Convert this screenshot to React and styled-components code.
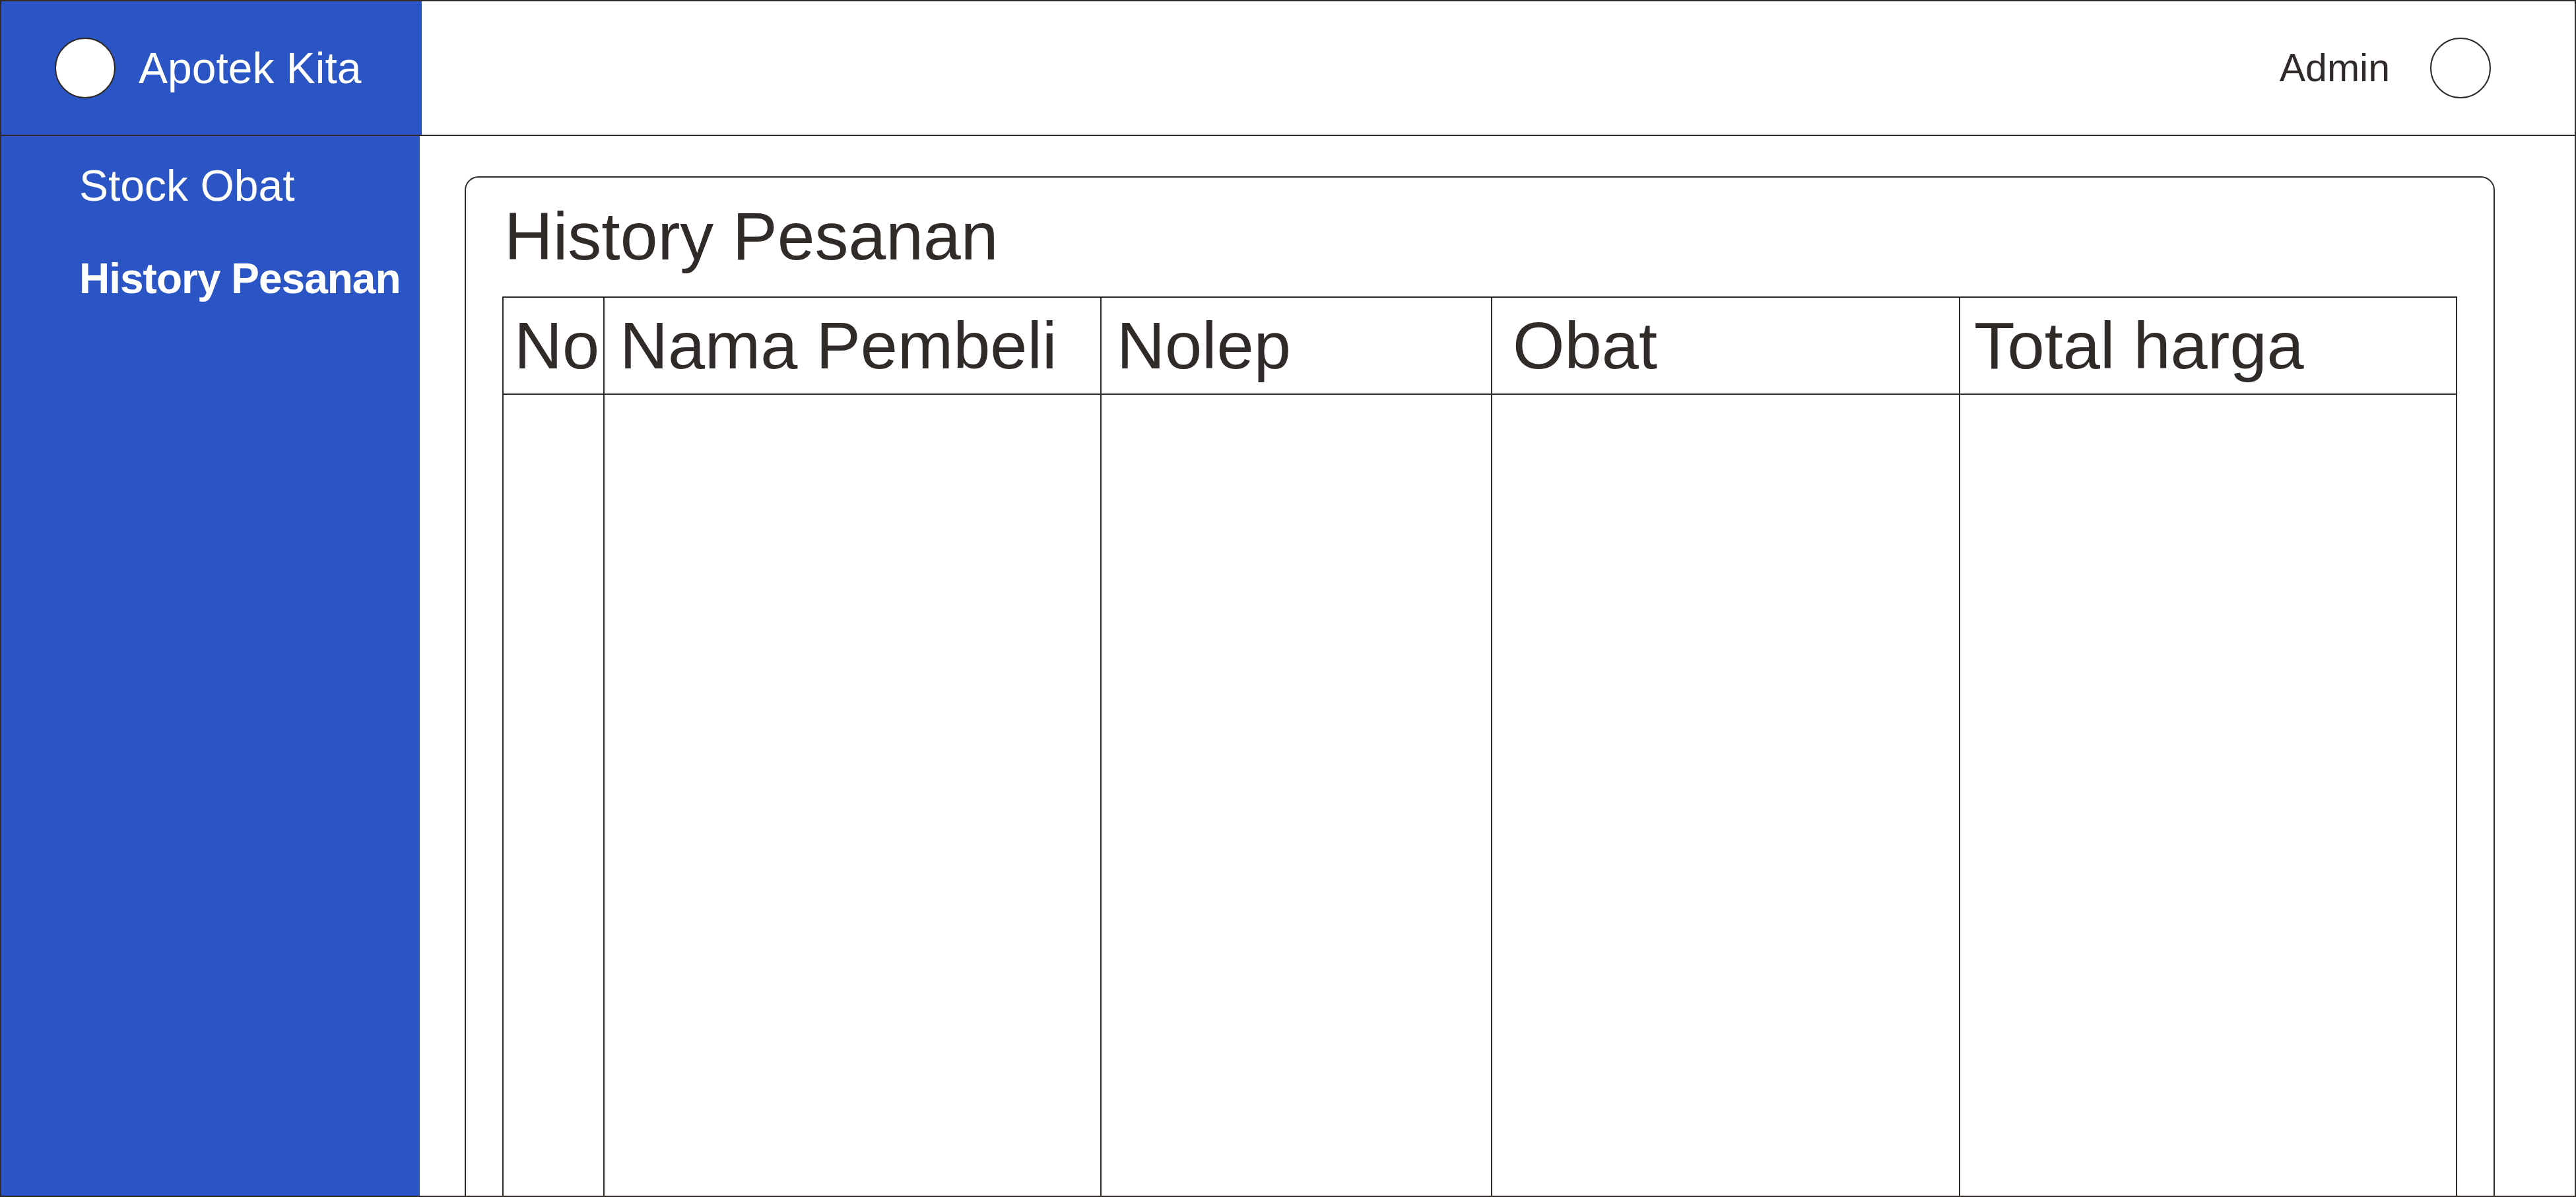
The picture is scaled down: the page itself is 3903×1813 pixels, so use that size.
import React from 'react';
import styled, { createGlobalStyle } from 'styled-components';

const GlobalStyle = createGlobalStyle`
  html, body {
    margin: 0;
    padding: 0;
    background: #ffffff;
  }
  * { box-sizing: border-box; }
`;

const ink = '#302b29';
const blue = '#2b54c5';

const Frame = styled.div`
  width: 100vw;
  height: 100vh;
  border: 2px solid ${ink};
  overflow: hidden;
  display: flex;
  flex-direction: column;
  font-family: "Liberation Sans", Arial, sans-serif;
  color: ${ink};
`;

const Header = styled.header`
  display: flex;
  height: 204px;
  flex-shrink: 0;
  border-bottom: 2px solid ${ink};
`;

const Brand = styled.div`
  width: 637px;
  background: ${blue};
  display: flex;
  align-items: center;
  gap: 35px;
  padding-left: 81px;
`;

const Circle = styled.div`
  width: 92px;
  height: 92px;
  border-radius: 50%;
  border: 2px solid ${ink};
  background: ${p => (p.$filled ? '#ffffff' : 'transparent')};
  flex-shrink: 0;
`;

const BrandName = styled.span`
  color: #ffffff;
  font-size: 66px;
`;

const TopBar = styled.div`
  flex: 1;
  display: flex;
  align-items: center;
  justify-content: flex-end;
  gap: 61px;
  padding-right: 127px;
`;

const UserName = styled.span`
  font-size: 59px;
`;

const Body = styled.div`
  flex: 1;
  display: flex;
  min-height: 0;
`;

const Sidebar = styled.nav`
  width: 637px;
  background: ${blue};
  display: flex;
  flex-direction: column;
  gap: 66px;
  padding: 37px 0 0 118px;
`;

const NavItem = styled.a`
  color: #ffffff;
  font-size: ${p => (p.$active ? 64 : 66)}px;
  font-weight: ${p => (p.$active ? 700 : 400)};
  letter-spacing: ${p => (p.$active ? '-1px' : '0')};
  text-decoration: none;
`;

const Main = styled.main`
  flex: 1;
  padding: 61px 121px 0 68px;
`;

const Card = styled.section`
  border: 2px solid ${ink};
  border-radius: 21px;
  height: 1700px;
  padding: 31px 55px 0;
`;

const Title = styled.h1`
  margin: 0 0 33px;
  padding-left: 3px;
  font-size: 102px;
  font-weight: 400;
  line-height: 116px;
`;

const Table = styled.table`
  width: 100%;
  border-collapse: collapse;
  table-layout: fixed;
`;

const Th = styled.th`
  height: 147px;
  border: 2px solid ${ink};
  font-size: 101px;
  font-weight: 400;
  text-align: left;
  padding: 0 0 0 ${p => p.$pad}px;
  white-space: nowrap;
  overflow: hidden;
`;

const Td = styled.td`
  height: 1300px;
  border: 2px solid ${ink};
`;

const columns = [
  { label: 'No', width: 153, pad: 16 },
  { label: 'Nama Pembeli', width: 753, pad: 23 },
  { label: 'Nolep', width: 592, pad: 23 },
  { label: 'Obat', width: 709, pad: 31 },
  { label: 'Total harga', width: 753, pad: 21 },
];

export default function App() {
  return (
    <>
      <GlobalStyle />
      <Frame>
        <Header>
          <Brand>
            <Circle $filled />
            <BrandName>Apotek Kita</BrandName>
          </Brand>
          <TopBar>
            <UserName>Admin</UserName>
            <Circle />
          </TopBar>
        </Header>
        <Body>
          <Sidebar>
            <NavItem href="#">Stock Obat</NavItem>
            <NavItem href="#" $active>History Pesanan</NavItem>
          </Sidebar>
          <Main>
            <Card>
              <Title>History Pesanan</Title>
              <Table>
                <colgroup>
                  {columns.map(c => (
                    <col key={c.label} style={{ width: c.width }} />
                  ))}
                </colgroup>
                <thead>
                  <tr>
                    {columns.map(c => (
                      <Th key={c.label} $pad={c.pad}>{c.label}</Th>
                    ))}
                  </tr>
                </thead>
                <tbody>
                  <tr>
                    {columns.map(c => (
                      <Td key={c.label} />
                    ))}
                  </tr>
                </tbody>
              </Table>
            </Card>
          </Main>
        </Body>
      </Frame>
    </>
  );
}
